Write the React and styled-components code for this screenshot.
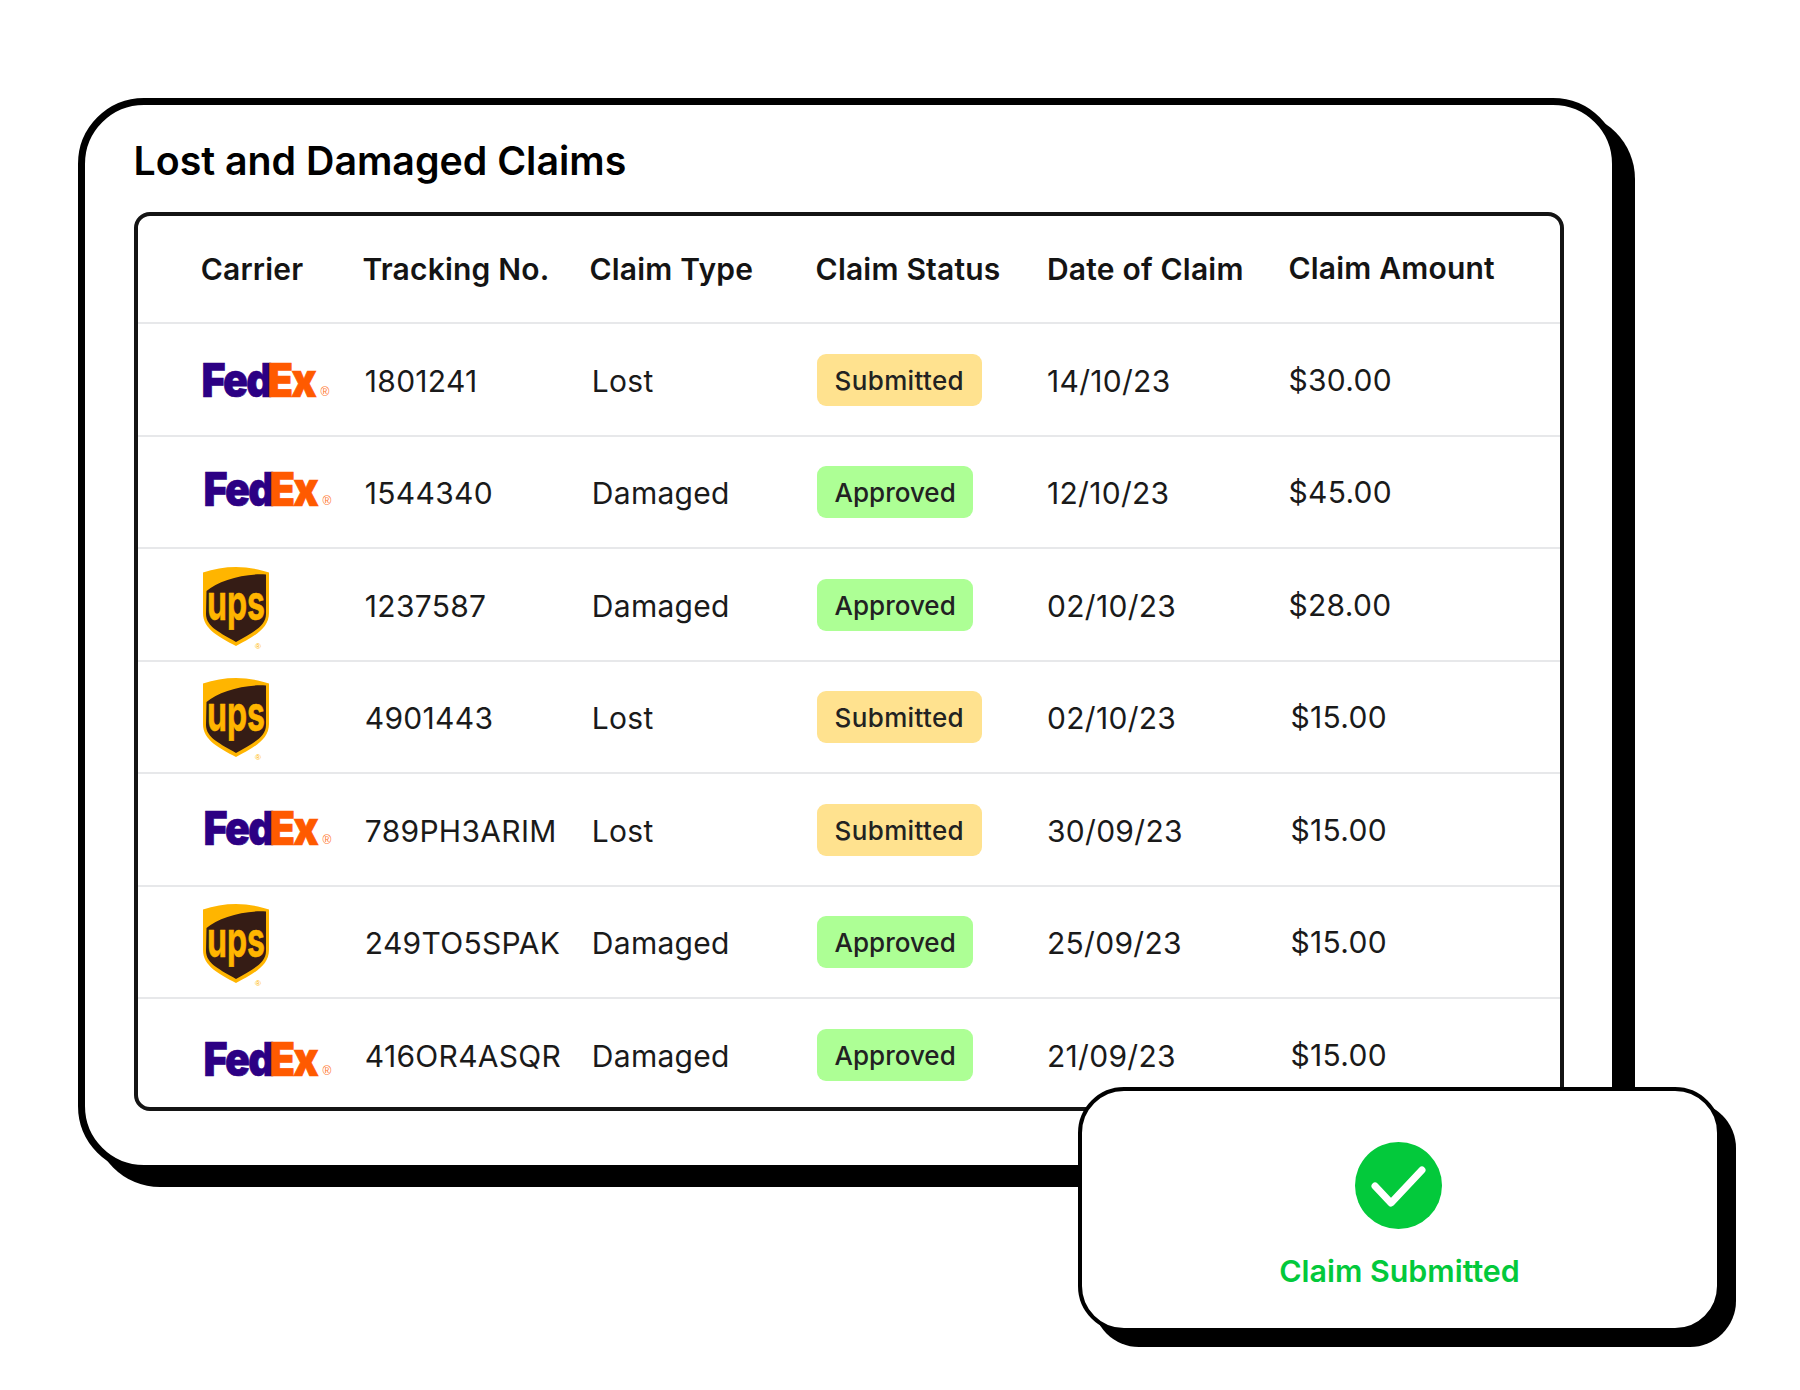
import React from "react";
import styled, { createGlobalStyle } from "styled-components";

const Global = createGlobalStyle`
  * { box-sizing: border-box; }
  html, body { margin: 0; background: #fff; }
  body { font-family: Inter, "Liberation Sans", sans-serif; color: #141414; }
`;

const Stage = styled.div`
  position: relative;
  width: 1800px;
  height: 1390px;
  padding: 98px 0 0 78px;
`;

const Card = styled.section`
  width: 1541px;
  border: 7.5px solid #000;
  border-radius: 66px;
  background: #fff;
  box-shadow: 16px 15px 0 #000;
  padding: 32px 48px 54px 48.5px;
`;

const Title = styled.h1`
  margin: 0 0 27px;
  font-size: 39.3px;
  line-height: 48px;
  font-weight: 600;
  color: #000;
`;

const Table = styled.div`
  height: 898.5px;
  border: 4px solid #141414;
  border-radius: 16px;
  overflow: hidden;
`;

const cols = "161.8px 227px 226.1px 231.4px 241.5px 1fr";

const HeadRow = styled.div`
  display: grid;
  grid-template-columns: ${cols};
  align-items: center;
  height: 108px;
  padding-left: 63.2px;
  border-bottom: 2px solid #e7e8ea;
`;

const HeadCell = styled.div`
  font-size: 30px;
  line-height: 36px;
  font-weight: 600;
  letter-spacing: 0.2px;
  white-space: nowrap;
  color: #141414;
  margin-top: ${p => (p.$raised ? "-2px" : "0")};
`;

const Row = styled.div`
  display: grid;
  grid-template-columns: ${cols};
  align-items: center;
  height: 112.5px;
  padding-left: 63.2px;
  border-bottom: 2px solid #e7e8ea;
`;

const Cell = styled.div`
  font-size: 30px;
  line-height: 36px;
  font-weight: 400;
  letter-spacing: 0.3px;
  white-space: nowrap;
  color: #1a1a1a;
  margin-left: ${p => p.$indent || 0}px;
  margin-top: ${p => (p.$raised ? "1px" : "3px")};
`;

const LogoCell = styled.div`
  align-self: start;
  line-height: 0;
  padding-top: ${p => p.$top}px;
  padding-left: ${p => p.$left}px;
`;

const BadgeCell = styled.div`
  padding-top: 1px;
`;

const Badge = styled.span`
  display: inline-flex;
  align-items: center;
  height: 52px;
  margin-left: 1px;
  padding: 1px ${p => (p.$kind === "Approved" ? "17px" : "18px")} 0 18px;
  border-radius: 9px;
  font-size: 26px;
  font-weight: 500;
  letter-spacing: ${p => (p.$kind === "Approved" ? "0" : "0.35px")};
  color: #222;
  background: ${p => (p.$kind === "Approved" ? "#adff95" : "#ffe28f")};
`;

const Toast = styled.aside`
  position: absolute;
  left: 1078px;
  top: 1086.5px;
  width: 643px;
  height: 245px;
  border: 4.5px solid #000;
  border-radius: 46px;
  background: #fff;
  box-shadow: 15px 15px 0 #000;
  display: flex;
  flex-direction: column;
  align-items: center;
  padding-top: 51px;
  gap: 22px;
`;

const ToastIcon = styled.svg`
  display: block;
  margin-right: 3px;
`;

const ToastText = styled.div`
  font-size: 30.4px;
  line-height: 40px;
  font-weight: 600;
  color: #03c93b;
`;

const LogoSvg = styled.svg`
  display: block;
  overflow: visible;
`;

const FedExLogo = () => (
  <LogoSvg width="130" height="36" viewBox="0 0 130 36">
    <text x="-1.5" y="34.5" fontFamily="Inter, sans-serif" fontWeight="900" fontSize="47" letterSpacing="-2" fill="#2c0084" stroke="#2c0084" strokeWidth="0.7" textLength="69.5" lengthAdjust="spacingAndGlyphs">Fed</text>
    <text x="64.5" y="34.5" fontFamily="Inter, sans-serif" fontWeight="900" fontSize="47" letterSpacing="-2" fill="#ff5a00" stroke="#ff5a00" strokeWidth="0.7" textLength="47.5" lengthAdjust="spacingAndGlyphs">Ex</text>
    <text x="117.5" y="34" fontFamily="'Liberation Sans', sans-serif" fontSize="12" fill="#ff7a33">®</text>
  </LogoSvg>
);

const UpsLogo = () => (
  <LogoSvg width="66" height="83" viewBox="0 0 66 83">
    <path d="M0 5.5C10 2 22 0 33 0C44 0 56 2 66 5.5L66 46C66 62 50 70 33 79C16 70 0 62 0 46Z" fill="#ffb500" />
    <path d="M3.5 24C15 14 40 6 63 7.5L63 47C63 60 48 66 33 75C18 66 3 60 3 47Z" fill="#351c15" />
    <text x="4" y="53.3" fontFamily="Inter, sans-serif" fontWeight="700" fontSize="50" fill="#ffb500" stroke="#ffb500" strokeWidth="0.5" textLength="58" lengthAdjust="spacingAndGlyphs">ups</text>
    <text x="52" y="82" fontFamily="'Liberation Sans', sans-serif" fontSize="8" fill="#ffb500">®</text>
  </LogoSvg>
);

const CheckIcon = () => (
  <ToastIcon width="87" height="87" viewBox="0 0 87 87">
    <circle cx="43.5" cy="43.5" r="43.5" fill="#03c93b" />
    <path d="M20 44L36 61L67 28" fill="none" stroke="#fff" strokeWidth="7" strokeLinecap="round" strokeLinejoin="round" />
  </ToastIcon>
);

const rows = [
  { c: "fedex", top: 38, left: 2.8, n: "1801241", t: "Lost", s: "Submitted", d: "14/10/23", a: "$30.00", ai: 0 },
  { c: "fedex", top: 34, left: 4, n: "1544340", t: "Damaged", s: "Approved", d: "12/10/23", a: "$45.00", ai: 0 },
  { c: "ups", top: 17.5, left: 2.8, n: "1237587", t: "Damaged", s: "Approved", d: "02/10/23", a: "$28.00", ai: 0 },
  { c: "ups", top: 16, left: 2.8, n: "4901443", t: "Lost", s: "Submitted", d: "02/10/23", a: "$15.00", ai: 2 },
  { c: "fedex", top: 35.5, left: 4, n: "789PH3ARIM", t: "Lost", s: "Submitted", d: "30/09/23", a: "$15.00", ai: 2 },
  { c: "ups", top: 17, left: 2.8, n: "249TO5SPAK", t: "Damaged", s: "Approved", d: "25/09/23", a: "$15.00", ai: 2 },
  { c: "fedex", top: 41.5, left: 4, n: "416OR4ASQR", t: "Damaged", s: "Approved", d: "21/09/23", a: "$15.00", ai: 2 },
];

export default function App() {
  return (
    <Stage>
      <Global />
      <Card>
        <Title>Lost and Damaged Claims</Title>
        <Table>
          <HeadRow>
            <HeadCell>Carrier</HeadCell>
            <HeadCell>Tracking No.</HeadCell>
            <HeadCell>Claim Type</HeadCell>
            <HeadCell>Claim Status</HeadCell>
            <HeadCell>Date of Claim</HeadCell>
            <HeadCell $raised>Claim Amount</HeadCell>
          </HeadRow>
          {rows.map(r => (
            <Row key={r.n}>
              <LogoCell $top={r.top} $left={r.left}>
                {r.c === "fedex" ? <FedExLogo /> : <UpsLogo />}
              </LogoCell>
              <Cell $indent={2.3}>{r.n}</Cell>
              <Cell $indent={2.3}>{r.t}</Cell>
              <BadgeCell><Badge $kind={r.s}>{r.s}</Badge></BadgeCell>
              <Cell>{r.d}</Cell>
              <Cell $indent={r.ai} $raised>{r.a}</Cell>
            </Row>
          ))}
        </Table>
      </Card>
      <Toast>
        <CheckIcon />
        <ToastText>Claim Submitted</ToastText>
      </Toast>
    </Stage>
  );
}
